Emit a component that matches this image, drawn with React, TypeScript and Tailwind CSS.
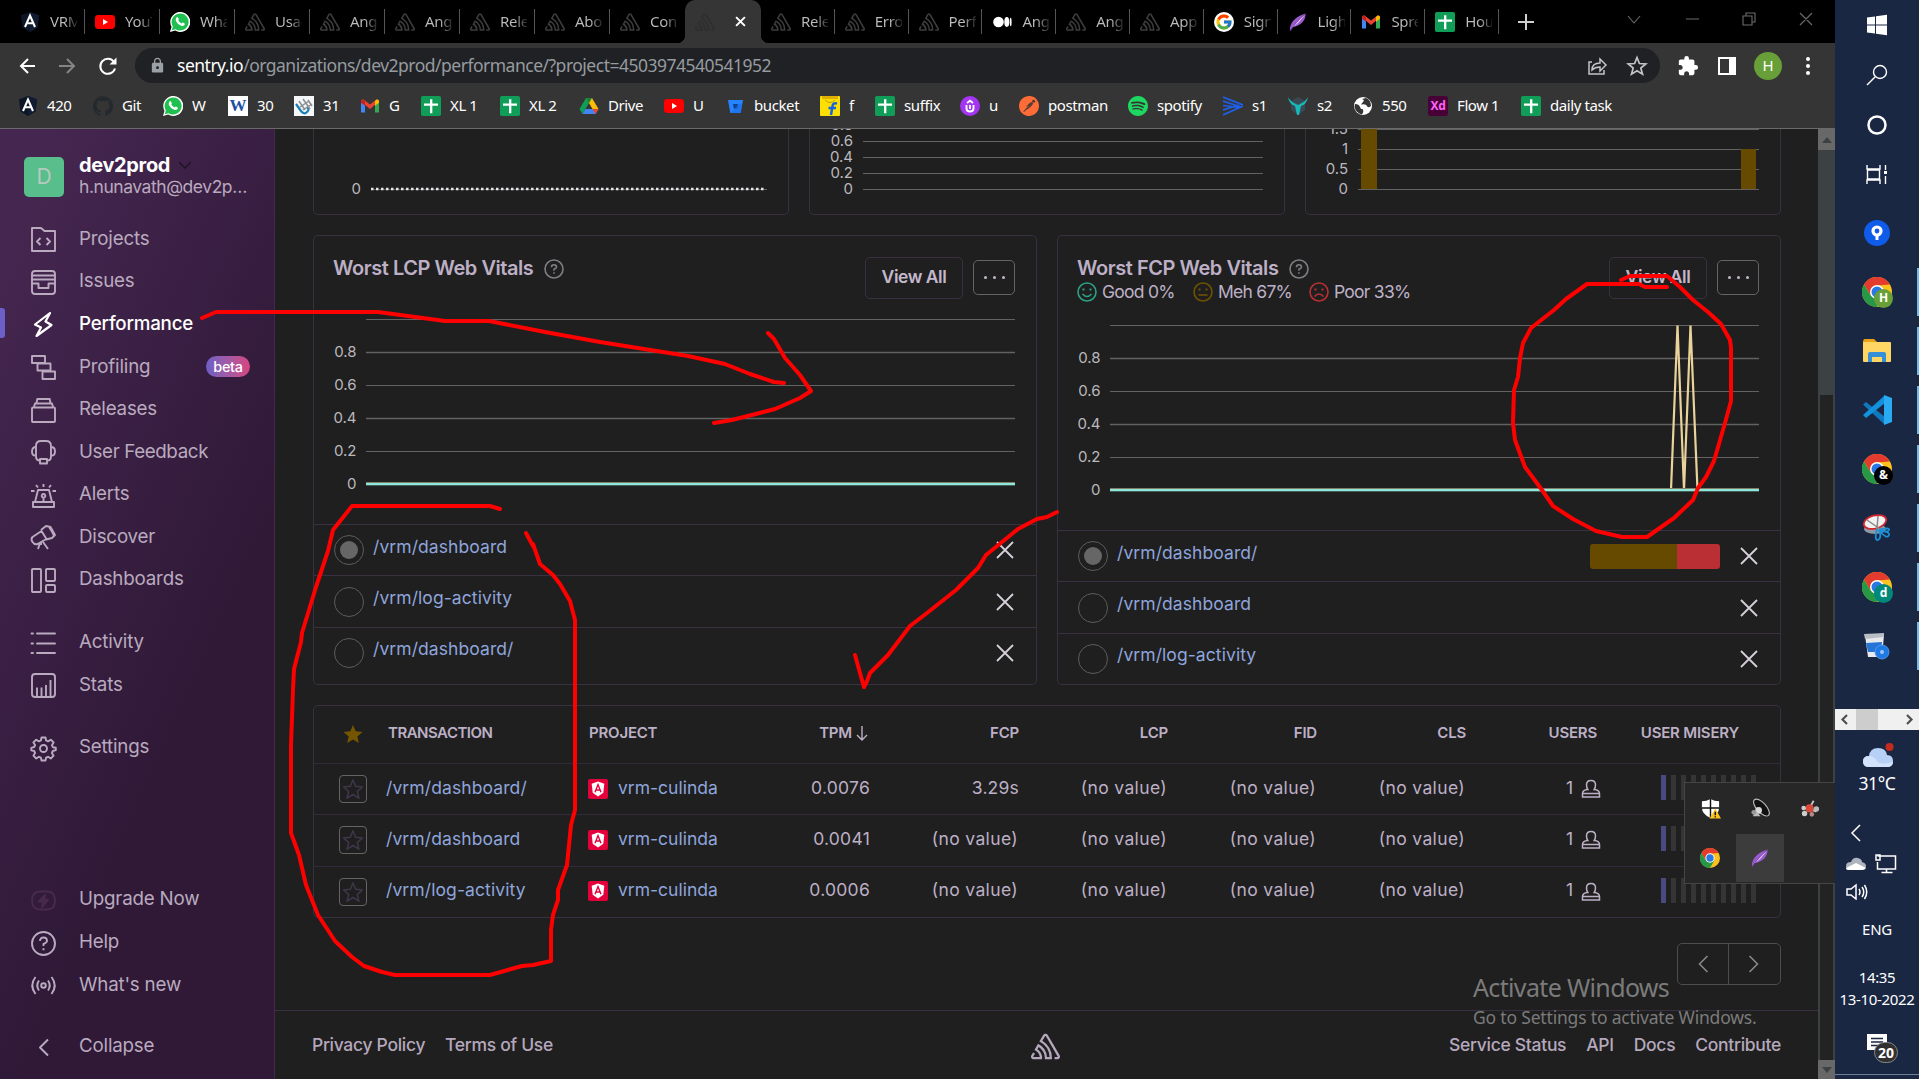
import type { ReactNode } from "react";
import { SiSentry, SiGithub, SiSpotify, SiPostman } from "react-icons/si";
import { FcGoogle } from "react-icons/fc";
import { FaWhatsapp } from "react-icons/fa";
import { MdExtension, MdLock } from "react-icons/md";

const SEGOE = "font-['Noto_Sans','Open_Sans',sans-serif]";

/* ---------- brand glyphs ---------- */

function AngularShield() {
  return (
    <svg viewBox="0 0 20 20" className="size-5">
      <path d="M10 0 19 3.3 17.6 15.4 10 20 2.4 15.4 1 3.3z" fill="#0d1626" />
      <path d="M10 0 19 3.3 17.6 15.4 10 20z" fill="#111c30" />
      <path d="M5 15 10 3.6 15 15M7 11.3h6" fill="none" stroke="#fff" strokeWidth="2.1" />
    </svg>
  );
}

function AngularTile() {
  return (
    <svg viewBox="0 0 20 20" className="size-5">
      <rect width="20" height="20" rx="2" fill="#e4003a" />
      <path d="M10 2.5 16.3 4.8 15.3 13.8 10 17.5 4.7 13.8 3.7 4.8z" fill="#fff" />
      <path d="M7 13.2 10 5.6 13 13.2M8 11h4" fill="none" stroke="#e4003a" strokeWidth="1.4" />
    </svg>
  );
}

function YouTube() {
  return (
    <svg viewBox="0 0 20 20" className="size-5">
      <rect y="3" width="20" height="14" rx="3.4" fill="#f00" />
      <path d="M8 7v6l5-3z" fill="#fff" />
    </svg>
  );
}

function WhatsApp() {
  return (
    <svg viewBox="0 0 20 20" className="size-5">
      <path d="M0 20 1.500 14.800A10 10 0 1 1 5.200 18.600z" fill="#fff" />
      <path d="M1.800 18.200 2.900 14.500A8.500 8.500 0 1 1 5.600 17.200z" fill="#20c050" />
      <path d="M6.500 5.500q1-1 1.600.2l.7 1.500q.2.500-.5 1.300 1.200 2.200 3.300 3 .8-1.200 1.300-.9l1.700.9q.6.600-.3 1.800-1.300 1-3 .5-4-1.300-5.500-5-.4-2 .7-3.300z" fill="#fff" />
    </svg>
  );
}

function Medium() {
  return (
    <svg viewBox="0 0 20 20" className="size-5" fill="#fff">
      <circle cx="6.500" cy="10" r="5.300" />
      <ellipse cx="14.800" cy="10" rx="2.500" ry="4.900" />
      <ellipse cx="18.700" cy="10" rx=".9" ry="4.300" />
    </svg>
  );
}

function Gmail() {
  return (
    <svg viewBox="0 0 20 20" className="size-5">
      <path d="M1 4.5v12h4V9z" fill="#4285f4" />
      <path d="M19 4.5v12h-4V9z" fill="#34a853" />
      <path d="M1 5.5Q1 2.8 3.6 3.6L10 8.4l6.4-4.8Q19 2.8 19 5.500L10 13z" fill="#ea4335" />
      <path d="M15 5v4.700l4-3V5.200Q18.600 2.700 16.300 3.700z" fill="#fbbc04" />
      <path d="M5 5v4.700L1 6.700V5.200Q1.400 2.700 3.700 3.700z" fill="#c5221f" />
    </svg>
  );
}

function Sheets() {
  return (
    <svg viewBox="0 0 20 20" className="size-5">
      <rect width="20" height="20" rx="1.8" fill="#0f9d58" />
      <path d="M3 8.600h14M10.200 3.200v14" stroke="#fff" strokeWidth="2.300" />
    </svg>
  );
}

function Drive() {
  return (
    <svg viewBox="0 0 20 20" className="size-5">
      <path d="M7 2h6l6.500 11h-6z" fill="#fbbc04" />
      <path d="M7 2 .5 13l3 5 6.500-11z" fill="#0f9d58" />
      <path d="M3.500 18h13l3-5h-13z" fill="#4285f4" />
      <path d="M7 2h6l-3 5z" fill="#188038" />
      <path d="m19.500 13-3 5-3-5z" fill="#ea4335" />
    </svg>
  );
}

function Feather() {
  return (
    <svg viewBox="0 0 20 20" className="size-5">
      <path d="M2 19C1 11 8 4 17.500 1.500 18 9 12 14 5 15z" fill="#9b59d0" />
      <path d="M2 19C6 12 11 7 17.500 1.500 12 10 9 12.500 5 15z" fill="#ddc4f5" />
      <path d="M2 19C6 13 11 7 17 2" stroke="#5c2a91" strokeWidth=".8" fill="none" />
    </svg>
  );
}

function Word() {
  return (
    <span className="flex size-5 items-center justify-center bg-white font-['Liberation_Serif',serif] text-[17px] leading-none font-bold text-[#1d4fa3]">
      W
    </span>
  );
}

function Stripes31() {
  return (
    <svg viewBox="0 0 20 20" className="size-5" fill="none">
      <rect width="20" height="20" fill="#f4f6f7" />
      <path d="m2 8 5 7q3 4 6 1t0-5" stroke="#1a7fb5" strokeWidth="2.200" />
      <path d="m5 5 6 9M9 3l7 10M14 4l4 6M6 11l9-6M9 14l9-6" stroke="#8a8f93" strokeWidth="1.500" />
    </svg>
  );
}

function Bucket() {
  return (
    <svg viewBox="0 0 20 20" className="size-5">
      <path d="M3 4h15l-2.300 13H5.300z" fill="#2684ff" />
      <path d="M8 8h5l-.8 4.500H8.800z" fill="#10418e" />
      <path d="M13 8h4.300l-1.600 9H6z" fill="#1565e0" opacity=".5" />
    </svg>
  );
}

function Flipkart() {
  return (
    <svg viewBox="0 0 20 20" className="size-5">
      <rect width="20" height="20" rx="1" fill="#fde003" />
      <path d="M2 0h16v3H2z" fill="#e2b100" />
      <path d="M5 4q5 5 10 0" fill="none" stroke="#c79c00" strokeWidth="1" />
      <path d="M17 7.500q-4-1-4.500 2.500L11 19M8.500 12h7.500" fill="none" stroke="#1464e0" strokeWidth="2.500" />
    </svg>
  );
}

function Udemy() {
  return (
    <svg viewBox="0 0 20 20" className="size-5">
      <circle cx="10" cy="10" r="10" fill="#a435f0" />
      <path d="M6.500 9v3.500q0 3 3.500 3t3.500-3V9M7 7l3-2.300L13 7M10 9v4" fill="none" stroke="#fff" strokeWidth="1.900" />
    </svg>
  );
}

function Sonar() {
  return (
    <svg viewBox="0 0 20 20" className="size-5">
      <path d="M0 1 20 9M0 5l18 6M0 9.500l16 2M20 10 0 19M16 9 0 14" stroke="#1f5fe8" strokeWidth="1.700" />
    </svg>
  );
}

function Bull() {
  return (
    <svg viewBox="0 0 20 20" className="size-5">
      <path d="m10 1 7 4v9l-7 5-7-5V5z" fill="#3a4a55" />
      <path d="M0 1q1 7 7 9l2 9h2l2-9q6-2 7-9-3 5-8 7l-2 1-2-1Q3 6 0 1z" fill="#16b8b8" />
    </svg>
  );
}

function Globe() {
  return (
    <svg viewBox="0 0 20 20" className="size-5">
      <circle cx="10" cy="10" r="9" fill="#fff" />
      <path d="M2 8q4 0 5 3t3 2q1 3-1 5.500Q3 17 1.500 11M9 3q3 1 1 3T8 8.500q5-1 6 1.500t4 0q0-6-5-8z" fill="#353535" />
    </svg>
  );
}

function Xd() {
  return (
    <span className="flex size-5 items-center justify-center rounded-[3px] bg-[#470137] font-['Noto_Sans',sans-serif] text-[12px] leading-none font-bold tracking-[-0.300px] text-[#ff61f6]">
      Xd
    </span>
  );
}

function Chrome({ className }: { className: string }) {
  return (
    <svg viewBox="0 0 30 30" className={className}>
      <circle cx="15" cy="15" r="15" fill="#fcc31e" />
      <path d="M2 7.500A15 15 0 0 1 28 7.500L15 8.500 9 19z" fill="#e33b2e" />
      <path d="M2 7.500A15 15 0 0 0 15 30l6.500-11.300L8.700 18.500z" fill="#279847" />
      <circle cx="15" cy="15" r="7" fill="#fff" />
      <circle cx="15" cy="15" r="5.500" fill="#2a78e4" />
    </svg>
  );
}

const Sentry = () => <SiSentry className="size-5 text-[#3d3d3d]" />;

/* ---------- browser frame ---------- */

const tabsBefore: [ReactNode, string][] = [
  [<AngularShield />, "VRM"],
  [<YouTube />, "YouT"],
  [<WhatsApp />, "Wha"],
  [<Sentry />, "Usag"],
  [<Sentry />, "Ang"],
  [<Sentry />, "Ang"],
  [<Sentry />, "Rele"],
  [<Sentry />, "Abo"],
  [<Sentry />, "Con"],
];
const tabsAfter: [ReactNode, string][] = [
  [<Sentry />, "Rele"],
  [<Sentry />, "Erro"],
  [<Sentry />, "Perf"],
  [<Medium />, "Ang"],
  [<Sentry />, "Ang"],
  [<Sentry />, "App"],
  [<span className="flex size-5 items-center justify-center rounded-full bg-white"><FcGoogle className="size-[18px]" /></span>, "Sign"],
  [<Feather />, "Ligh"],
  [<Gmail />, "Spre"],
  [<Sheets />, "Hou"],
];

function Tab({ icon, label, width, last }: { icon: ReactNode; label: string; width: string; last?: boolean }) {
  return (
    <div className={`flex h-[43px] shrink-0 items-center ${width}`}>
      <span className="ml-2.5 shrink-0">{icon}</span>
      <span className="ml-2.5 w-[27px] overflow-hidden bg-gradient-to-r from-[#bdbdbd] from-55% to-[#222] bg-clip-text text-[15px] tracking-[-0.300px] whitespace-nowrap text-transparent">
        {label}
      </span>
      {!last && <span className="ml-auto h-[25px] w-px bg-[#555]" />}
    </div>
  );
}

function TabStrip() {
  return (
    <div className="flex h-[43px] shrink-0 items-center bg-black pl-[10px]">
      {tabsBefore.map(([icon, label], i) => (
        <Tab key={i} icon={icon} label={label} width="w-[75px]" last={i === 8} />
      ))}
      <div className="relative flex h-[43px] w-[76px] shrink-0 items-center rounded-t-[10px] bg-[#353535] pl-[10px]">
        <SiSentry className="size-5 text-[#2e2e2e]" />
        <svg viewBox="0 0 10 10" className="ml-[20px] size-[11px]">
          <path d="m1 1 8 8M9 1 1 9" stroke="#fff" strokeWidth="1.800" />
        </svg>
        <span className="absolute bottom-0 -left-2 size-2 bg-[radial-gradient(circle_at_0_0,#000_8px,#353535_8.500px)]" />
        <span className="absolute -right-2 bottom-0 size-2 bg-[radial-gradient(circle_at_100%_0,#000_8px,#353535_8.500px)]" />
      </div>
      {tabsAfter.map(([icon, label], i) => (
        <Tab key={i} icon={icon} label={label} width="w-[73.800px]" />
      ))}
      <svg viewBox="0 0 16 16" className="ml-[19px] size-4">
        <path d="M8 0v16M0 8h16" stroke="#cfcfcf" strokeWidth="2" />
      </svg>
      <svg viewBox="0 0 190 20" className="mt-[-6px] mr-[21px] ml-auto h-5 w-[190px]" fill="none" stroke="#6c6c6c" strokeWidth="1.100">
        <path d="m9 7 6 7 6-7M67 10h13M124 7h9v9h-9zM127 7V4h9v9h-3M181 4l12 12M193 4l-12 12" transform="translate(-5 0)" />
      </svg>
    </div>
  );
}

function AddressBar() {
  return (
    <div className="flex h-[45px] shrink-0 items-center bg-[#353535]">
      <svg viewBox="0 0 100 20" className="ml-[18px] h-5 w-[100px]" fill="none" strokeWidth="2">
        <path d="M17 10H3m7-7-7 7 7 7" stroke="#fff" />
        <path d="M41 10h15m-7-7 7 7-7 7" stroke="#858585" />
        <path d="M96 6a7.500 7.500 0 1 0 1 6.500" stroke="#fff" />
        <path d="M98.500 1.500v7h-7z" fill="#fff" />
      </svg>
      <div className="ml-[17px] flex h-[35px] w-[1525px] items-center rounded-full bg-[#202124] pl-[14px]">
        <MdLock className="size-[17px] text-[#9aa0a6]" />
        <span className="ml-[11px] text-[17.500px] tracking-[-0.500px] whitespace-nowrap text-[#969ba0]">
          <span className="text-white">sentry.io</span>/organizations/dev2prod/performance/?project=4503974540541952
        </span>
        <svg viewBox="0 0 22 22" className="mr-[18px] ml-auto size-[22px]" fill="none" stroke="#c4c4c4" strokeWidth="1.500">
          <path d="M6 7H3v12h15v-4M6 15q0-7 8-7V4l6 6-6 6v-4q-5 0-8 3z" />
        </svg>
        <svg viewBox="0 0 22 22" className="mr-[12px] size-[22px]" fill="none" stroke="#c4c4c4" strokeWidth="1.700">
          <path d="m11 2.500 2.400 6 6.400.4-5 4.100 1.700 6.200-5.500-3.500-5.500 3.500L7.200 13l-5-4.100 6.400-.4z" />
        </svg>
      </div>
      <MdExtension className="ml-[17px] size-[22px] text-white" />
      <span className="ml-[19px] block h-[18px] w-[18px] border-2 border-r-[7px] border-white" />
      <span className="ml-[18px] flex size-7 items-center justify-center rounded-full bg-[#689f38] text-[15px] text-white">H</span>
      <span className="ml-[24px] flex flex-col gap-[3px]">
        <i className="size-1 rounded-full bg-white" />
        <i className="size-1 rounded-full bg-white" />
        <i className="size-1 rounded-full bg-white" />
      </span>
    </div>
  );
}

const bookmarks: [ReactNode, string, string][] = [
  [<AngularShield />, "420", "w-[75px]"],
  [<SiGithub className="size-5 text-[#24292e]" />, "Git", "w-[70px]"],
  [<WhatsApp />, "W", "w-[65px]"],
  [<Word />, "30", "w-[66px]"],
  [<Stripes31 />, "31", "w-[66px]"],
  [<Gmail />, "G", "w-[61px]"],
  [<Sheets />, "XL 1", "w-[79px]"],
  [<Sheets />, "XL 2", "w-[79px]"],
  [<Drive />, "Drive", "w-[85px]"],
  [<YouTube />, "U", "w-[61px]"],
  [<Bucket />, "bucket", "w-[95px]"],
  [<Flipkart />, "f", "w-[55px]"],
  [<Sheets />, "suffix", "w-[85px]"],
  [<Udemy />, "u", "w-[59px]"],
  [<SiPostman className="size-5 text-[#ff6c37]" />, "postman", "w-[109px]"],
  [<SiSpotify className="size-5 text-[#1ed760]" />, "spotify", "w-[95px]"],
  [<Sonar />, "s1", "w-[65px]"],
  [<Bull />, "s2", "w-[65px]"],
  [<Globe />, "550", "w-[75px]"],
  [<Xd />, "Flow 1", "w-[93px]"],
  [<Sheets />, "daily task", "w-[110px]"],
];

function Bookmarks() {
  return (
    <div className="flex h-[41px] shrink-0 items-center border-b border-[#6a6a6a] bg-[#353535] pb-[5px] pl-[18px]">
      {bookmarks.map(([icon, label, width], i) => (
        <div key={i} className={`flex shrink-0 items-center gap-[9px] ${width}`}>
          {icon}
          <span className="text-[15px] tracking-[-0.400px] whitespace-nowrap text-white">{label}</span>
        </div>
      ))}
    </div>
  );
}

/* ---------- sidebar ---------- */

const navIcons: Record<string, ReactNode> = {
  Projects: <path d="M1 1h9l3.500 3H24v20H1zM9.500 11 6 14.500 9.500 18M15.500 11l3.500 3.500-3.500 3.500" />,
  Issues: <path d="M4 1h17q3 0 3 3v17q0 3-3 3H4q-3 0-3-3V4q0-3 3-3zM1 5.500h23M1 9.500h23M1 13.500h6.500V18h10v-4.500H24" />,
  Performance: <path d="M19 1 4 12.500l6 3L5.500 24 20.500 13l-6-3.500z" strokeWidth="2.200" />,
  Profiling: <path d="M1 1h13v7H1zM6.500 8.500h13v7h-13zM11.500 16.500H24V24H11.500z" />,
  Releases: <path d="M2 9.500h21q1 0 1 1V23q0 1-1 1H2q-1 0-1-1V10.500q0-1 1-1zM3 9l1-3.500h17L22 9M5.500 5l.8-4h12.400l.8 4" />,
  "User Feedback": <path d="M9 20.500q-4 0-4-4V6q0-5 5-5h5q5 0 5 5v10.500q0 4-3.500 4M5 7Q1 7 1 11.500T5 15.500M20 7q4 0 4 4.500t-4 4M9 19h7v4.500H9z" />,
  Alerts: <path d="M2 19h21v5H2zM4 19 7 7h11l3 12M12.500 15v4M12.500 1v3M5 2l2 2.500M20 2l-2 2.500M0 8h3.500M21.500 8H25M12.500 11a1.800 1.800 0 1 0 .01 0z" />,
  Discover: <path d="m1.500 12 9-6 5 8-9 5q-3 1-5-2t0-5zM10 5l5-4 4.500 1L24 10l-3 3-6 1.500M18 2q3 4 5 9M9 18l-2 6M12 17l5 7M10 17v3" />,
  Dashboards: <path d="M2 1h7q1 0 1 1v21q0 1-1 1H2q-1 0-1-1V2q0-1 1-1zM16 1h7q1 0 1 1v10q0 1-1 1h-7q-1 0-1-1V2q0-1 1-1zM16 17h7q1 0 1 1v5q0 1-1 1h-7q-1 0-1-1v-5q0-1 1-1z" />,
  Activity: <path d="M6 2.500h18M6 12.500h18M6 22h18M.5 2.500H2M.5 12.500H2M.5 22H2" strokeLinecap="round" />,
  Stats: <path d="M4 1h17q3 0 3 3v17q0 3-3 3H4q-3 0-3-3V4q0-3 3-3zM6 24V14.500M10.500 24V14.500M15 24V12M19.500 24V7" />,
  Settings: (
    <>
      <circle cx="12.500" cy="12.500" r="3.500" />
      <path d="M10.500 1.500h4l.6 3 2 .9 2.700-1.700 2.800 2.800-1.700 2.700.9 2 3 .6v2.400l-3 .8-.9 2 1.700 2.700-2.800 2.800-2.700-1.700-2 .9-.6 2.800h-4l-.6-2.800-2-.9-2.700 1.700-2.800-2.800L4.100 17l-.9-2-2.900-.6v-2.600l2.900-.8.9-2-1.700-2.500 2.800-2.800 2.700 1.700 2-.9z" />
    </>
  ),
  "Upgrade Now": (
    <g stroke="#482a4c">
      <path d="M9 3.500h7q8 0 8 9t-8 9H9q-8 0-8-9t8-9z" />
      <path d="m14 7-6 6.500h4L11 19l6-7h-4z" fill="#482a4c" />
    </g>
  ),
  Help: (
    <>
      <circle cx="12.500" cy="12.500" r="11.500" />
      <path d="M9 10q0-3.500 3.500-3.500T16 9.800q0 2-3.500 3V15M12.500 17.200v2" />
    </>
  ),
  "What's new": (
    <>
      <circle cx="12.500" cy="12.500" r="2.300" />
      <path d="M8 7.500q-3.500 5 0 10M17 7.500q3.500 5 0 10M4.500 4q-6.500 8.500 0 17M20.500 4q6.500 8.500 0 17" />
    </>
  ),
  Collapse: <path d="m17 4.500-8 8 8 8" />,
};

function NavItem({ label, active, badge }: { label: string; active?: boolean; badge?: string }) {
  return (
    <div className={`flex h-[42.600px] shrink-0 items-center ${active ? "text-white" : "text-[#b9aabf]"}`}>
      <span className={`h-[30px] w-[5px] rounded-r-[3px] ${active ? "bg-[#6c5fc7]" : ""}`} />
      <svg viewBox="0 0 25 25" className="mt-[3px] ml-[26px] size-[25px] overflow-visible" fill="none" stroke="currentColor" strokeWidth="1.900" strokeLinejoin="round">
        {navIcons[label]}
      </svg>
      <span className={`mt-px ml-[23px] text-[18.750px] whitespace-nowrap ${active ? "font-medium" : ""} ${label.length > 11 ? "tracking-[-0.380px]" : "tracking-[-0.200px]"}`}>
        {label}
      </span>
      {badge && (
        <span className="mt-px mr-[24px] ml-auto flex h-[21px] w-11 items-center justify-center rounded-full bg-gradient-to-r from-[#6c5fc7] to-[#d6437f] text-[14.500px] font-medium tracking-[-0.300px] text-white">
          {badge}
        </span>
      )}
    </div>
  );
}

function Sidebar() {
  return (
    <aside className="flex w-[275px] shrink-0 flex-col border-r border-[#422a4c] bg-[linear-gradient(294.17deg,#2f1937_35.57%,#452650_92.42%)]">
      <div className="flex h-[88px] items-start pt-7 pl-6">
        <span className="flex size-10 items-center justify-center rounded-[5px] bg-[#57be8c] text-[21px] text-[#b9c9c0]">D</span>
        <div className="-mt-px ml-[15px]">
          <div className="flex h-[18px] items-center text-[20px] font-bold tracking-[-0.350px] text-white">
            dev2prod
            <svg viewBox="0 0 12 8" className="ml-[9px] h-2 w-3" fill="none" stroke="#1f1425" strokeWidth="1.500">
              <path d="m0 1 6 6 6-6" />
            </svg>
          </div>
          <div className="flex h-[27px] items-center text-[17.500px] tracking-[-0.450px] text-[#b9aabf]">h.nunavath@dev2p…</div>
        </div>
      </div>
      {["Projects", "Issues", "Performance", "Profiling", "Releases", "User Feedback", "Alerts", "Discover", "Dashboards"].map((l) => (
        <NavItem key={l} label={l} active={l === "Performance"} badge={l === "Profiling" ? "beta" : undefined} />
      ))}
      <div className="h-5 shrink-0" />
      <NavItem label="Activity" />
      <NavItem label="Stats" />
      <div className="h-5 shrink-0" />
      <NavItem label="Settings" />
      <div className="mt-auto mb-[12px] flex flex-col">
        <NavItem label="Upgrade Now" />
        <NavItem label="Help" />
        <NavItem label="What's new" />
        <div className="h-[19px]" />
        <NavItem label="Collapse" />
      </div>
    </aside>
  );
}

/* ---------- performance page ---------- */

const GRID = "#626262";

function AxisLabel({ x, y, children }: { x: number; y: number; children: ReactNode }) {
  return (
    <text x={x} y={y + 5} textAnchor="end" fontSize="15" fill="#bbb8be">
      {children}
    </text>
  );
}

function TopCard({ children }: { children: ReactNode }) {
  return (
    <div className="h-[86px] w-[476px] overflow-hidden rounded-b-[5px] border border-t-0 border-[#393041]">
      <svg viewBox="0 0 474 85" className="h-[85px] w-[474px]">
        {children}
      </svg>
    </div>
  );
}

function TopCards() {
  return (
    <div className="flex gap-5">
      <TopCard>
        <AxisLabel x={47} y={60}>0</AxisLabel>
        <path d="M57 60.500h396" stroke={GRID} />
        <path d="M57 60h395" stroke="#e8e4ea" strokeWidth="2.500" strokeDasharray="2.500 2.500" />
      </TopCard>
      <TopCard>
        {["0.8", "0.6", "0.4", "0.2", "0"].map((v, i) => (
          <g key={v}>
            <path d={`M53 ${Math.round(-4.5 + i * 16.1) + 0.5}h400`} stroke={GRID} />
            <AxisLabel x={43} y={-4.500 + i * 16.100}>{v}</AxisLabel>
          </g>
        ))}
      </TopCard>
      <TopCard>
        {["1.5", "1", "0.5", "0"].map((v, i) => (
          <g key={v}>
            <path d={`M52 ${i * 20 + 0.5}h401`} stroke={GRID} />
            <AxisLabel x={42} y={i * 20}>{v}</AxisLabel>
          </g>
        ))}
        <path d="M55 0h16v60H55zM435 20h15v40h-15z" fill="#664a00" />
      </TopCard>
    </div>
  );
}

function Face({ color, mouth }: { color: string; mouth: string }) {
  return (
    <svg viewBox="0 0 20 20" className="size-5" fill="none" stroke={color} strokeWidth="1.600">
      <circle cx="10" cy="10" r="9" />
      <path d={mouth} />
      <path d="M6.500 6.500v2M13.500 6.500v2" strokeWidth="2" />
    </svg>
  );
}

interface VitalsProps {
  title: string;
  shift: number;
  height: string;
  rows: string[];
  scores?: boolean;
}

function VitalsCard({ title, shift, height, rows, scores }: VitalsProps) {
  return (
    <div className="flex h-[450px] w-[724px] flex-col overflow-hidden rounded-[5px] border border-[#393041]">
      <div className="flex h-[79px] shrink-0 items-start pr-[21px] pl-[19px]">
        <div>
          <div className="mt-[20px] flex h-6 items-center text-[20px] font-semibold tracking-[-0.450px] whitespace-nowrap text-[#bdb0c6]">
            {title}
            <svg viewBox="0 0 20 20" className="mt-px ml-[11px] size-5" fill="none" stroke="#807c84" strokeWidth="1.600">
              <circle cx="10" cy="10" r="9" />
              <path d="M7.500 8.200q0-2.500 2.500-2.500t2.500 2.300q0 1.500-2.500 2.300v1.500M10 13.300v1.500" />
            </svg>
          </div>
          {scores && (
            <div className="flex h-6 items-center text-[17.500px] tracking-[-0.750px] whitespace-nowrap text-[#bdb0c6]">
              <Face color="#2ba185" mouth="M5.500 12q4.500 5 9 0" />
              <span className="w-[96px] pl-[5px]">Good 0%</span>
              <Face color="#6f5200" mouth="M5.500 13h9" />
              <span className="w-[96px] pl-[5px]">Meh 67%</span>
              <Face color="#b92f34" mouth="M5.500 14.500q4.500-5 9 0" />
              <span className="pl-[5px]">Poor 33%</span>
            </div>
          )}
        </div>
        <div className="mt-[21px] ml-auto flex h-[42px] w-[98px] items-center justify-center rounded-[5px] border border-[#393041] pb-0.5 text-[17.500px] font-semibold tracking-[-0.450px] text-[#c4b8cc]">
          View All
        </div>
        <div className="mt-[24px] ml-2.5 flex h-[35px] w-[42px] items-center justify-center gap-1.5 rounded-[5px] border border-[#646464]">
          <i className="size-[3px] rounded-full bg-[#c4b8cc]" />
          <i className="size-[3px] rounded-full bg-[#c4b8cc]" />
          <i className="size-[3px] rounded-full bg-[#c4b8cc]" />
        </div>
      </div>
      <svg viewBox={`0 ${-shift} 722 ${209 + shift}`} className={`w-[722px] shrink-0 ${height}`}>
        {["", "0.8", "0.6", "0.4", "0.2", "0"].map((v, i) => (
          <g key={i}>
            <path d={`M52 ${Math.round(4 + i * 32.9) + 0.5}h649`} stroke={GRID} strokeWidth={i % 2 ? 1.5 : 1} />
            <AxisLabel x={42.500} y={4 + i * 32.900}>{v}</AxisLabel>
          </g>
        ))}
        {scores && <path d="M613 169 619.500 4.500 626 169 632.500 4.500 639.500 169" fill="none" stroke="#e9d39b" strokeWidth="2.200" strokeLinejoin="bevel" />}
        <path d="M52 167.700h649" stroke="#857c68" strokeWidth="1.200" />
        <path d="M52 169.200h649" stroke="#8ce8d8" strokeWidth="2.200" />
      </svg>
      {rows.map((r, i) => (
        <div key={r} className="flex h-[51.400px] shrink-0 items-center border-t border-[#393041] px-5">
          <span className="flex size-[30px] items-center justify-center rounded-full border border-[#5c5c5c]">
            {i === 0 && <i className="size-[18px] rounded-full bg-[#666]" />}
          </span>
          <span className="-mt-[7px] ml-[9px] text-[17.500px] tracking-[0.080px] whitespace-nowrap text-[#8fa5dc]">{r}</span>
          {scores && i === 0 && (
            <span className="mr-[20px] ml-auto flex h-[25px] w-[130px] overflow-hidden rounded-[3px]">
              <i className="w-[87px] bg-[#664a00]" />
              <i className="flex-1 bg-[#b92f34]" />
            </span>
          )}
          <svg viewBox="0 0 18 18" className={`mr-[2px] size-[18px] ${scores && i === 0 ? "" : "ml-auto"}`}>
            <path d="m1 1 16 16M17 1 1 17" stroke="#d6d0da" strokeWidth="1.800" />
          </svg>
        </div>
      ))}
    </div>
  );
}

const STAR = "m10 1 2.700 6.300 6.800.6-5.200 4.500 1.600 6.700L10 15.500l-5.900 3.600 1.600-6.700L.5 7.900l6.800-.6z";
const COLS = "grid grid-cols-[262px_204px_90px_149px_149px_149px_149px_132px_1fr] items-center";

function TransactionTable() {
  const rows = [
    ["/vrm/dashboard/", "0.0076", "3.29s"],
    ["/vrm/dashboard", "0.0041", "(no value)"],
    ["/vrm/log-activity", "0.0006", "(no value)"],
  ];
  return (
    <div className="mt-5 h-[213px] overflow-hidden rounded-[5px] border border-[#393041] text-[#bdb0c6]">
      <div className={`${COLS} h-[57px] pb-[3px] text-right text-[15px] font-semibold tracking-[-0.200px] whitespace-nowrap`}>
        <div className="flex items-center pl-[29px] tracking-[-0.500px]">
          <svg viewBox="0 0 20 20" className="mt-px mr-[25px] size-5">
            <path d={STAR} fill="#755600" />
          </svg>
          TRANSACTION
        </div>
        <div className="pl-[13px] text-left">PROJECT</div>
        <div className="flex items-center justify-end gap-1 pr-0.5">
          TPM
          <svg viewBox="0 0 12 15" className="h-[15px] w-3" fill="none" stroke="currentColor" strokeWidth="1.400">
            <path d="M6 0v14M1 9l5 5 5-5" />
          </svg>
        </div>
        <div>FCP</div>
        <div>LCP</div>
        <div>FID</div>
        <div>CLS</div>
        <div className="pr-px">USERS</div>
        <div className="pr-[41px]">USER MISERY</div>
      </div>
      {rows.map(([name, tpm, fcp]) => (
        <div key={name} className={`${COLS} h-[51.300px] border-t border-[#322a3a] pb-[3px] text-right text-[17.500px] whitespace-nowrap`}>
          <div className="flex items-center pl-[25px] tracking-[0.100px] text-[#8fa5dc]">
            <span className="mt-[3px] mr-[19px] flex size-7 items-center justify-center rounded-[4px] border border-[#646464]">
              <svg viewBox="0 0 20 20" className="size-5">
                <path d={STAR} fill="none" stroke="#3f364a" strokeWidth="1.500" />
              </svg>
            </span>
            {name}
          </div>
          <div className="flex items-center gap-[10px] pl-[12px] text-[#8fa5dc]">
            <span className="mt-0.5"><AngularTile /></span>
            vrm-culinda
          </div>
          <div className="tracking-[0.250px]">{tpm}</div>
          <div className={fcp === "(no value)" ? "pr-px tracking-[0.350px]" : "tracking-[0.200px]"}>{fcp}</div>
          <div className="pr-px tracking-[0.350px]">(no value)</div>
          <div className="pr-px tracking-[0.350px]">(no value)</div>
          <div className="pr-px tracking-[0.350px]">(no value)</div>
          <div className="-mr-[3px] flex items-center justify-end gap-2">
            1
            <svg viewBox="0 0 20 20" className="mt-[3px] size-5" fill="none" stroke="currentColor" strokeWidth="1.500">
              <path d="M6.800 10.500Q5.500 8.500 5.500 6q0-4.500 4.500-4.500T14.500 6q0 2.500-1.300 4.500Q18.500 11 18.500 14.500V18h-17v-3.500Q1.500 11 6.800 10.500zM2 14.500h16" />
            </svg>
          </div>
          <div className="flex gap-[5px] pl-[63px]">
            {Array.from({ length: 10 }, (_, i) => (
              <i key={i} className={`h-[25px] w-[5px] ${i === 0 ? "bg-[#484a80]" : "bg-[#353535]"}`} />
            ))}
          </div>
        </div>
      ))}
    </div>
  );
}

function Footer() {
  return (
    <footer className="mt-[25px] flex h-[69px] items-center border-t border-[#393041] pr-[37px] pl-[37px] text-[17.500px] font-medium tracking-[-0.300px] text-[#b5a8bd]">
      <span className="w-[133px]">Privacy Policy</span>
      <span className="w-[586px]">Terms of Use</span>
      <SiSentry className="mt-0.5 size-[29px] text-[#b5a8bd]" />
      <span className="ml-auto">Service Status</span>
      <span className="ml-5">API</span>
      <span className="ml-5">Docs</span>
      <span className="ml-5">Contribute</span>
    </footer>
  );
}

function Page() {
  return (
    <main className="flex w-[1543px] shrink-0 flex-col bg-[#1f1f1f]">
      <div className="w-[1506px] pl-[38px]">
        <TopCards />
        <div className="mt-5 flex gap-5">
          <VitalsCard title="Worst LCP Web Vitals" shift={0} height="h-[209px]" rows={["/vrm/dashboard", "/vrm/log-activity", "/vrm/dashboard/"]} />
          <VitalsCard title="Worst FCP Web Vitals" shift={6} height="h-[215px]" rows={["/vrm/dashboard/", "/vrm/dashboard", "/vrm/log-activity"]} scores />
        </div>
        <TransactionTable />
        <div className="mt-[25px] ml-auto flex h-[42px] w-[104px] rounded-[5px] border border-[#4d4d4d]">
          <svg viewBox="0 0 102 40" className="h-10 w-[102px]" fill="none" stroke="#8d8a90" strokeWidth="1.500">
            <path d="M50.500 0v40" stroke="#4d4d4d" strokeWidth="1" />
            <path d="m29.500 12-8 8 8 8M71.500 12l8 8-8 8" />
          </svg>
        </div>
      </div>
      <Footer />
    </main>
  );
}

function ScrollBar() {
  return (
    <div className="flex w-[17px] shrink-0 flex-col border-x-2 border-[#3c4244] bg-[#232323]">
      <div className="-mx-0.5 flex h-[21px] items-center justify-center bg-[#686868]">
        <svg viewBox="0 0 10 6" className="h-1.5 w-2.5"><path d="M5 0 10 6H0z" fill="#3c4244" /></svg>
      </div>
      <div className="-mx-0.5 mr-0 h-[245px] bg-[#3c4244]" />
      <div className="-mx-0.5 mt-auto flex h-[19px] items-center justify-center bg-[#686868]">
        <svg viewBox="0 0 10 6" className="h-1.5 w-2.5"><path d="M5 6 10 0H0z" fill="#3c4244" /></svg>
      </div>
    </div>
  );
}

/* ---------- overlays ---------- */

const strokes = [
  "M202 318 216 312H378L445 321H489L545 332 600 342 688 356 725 364 750 374 774 382 784 383",
  "M768 333 774 339 785 358 800 375 811 391 800 398 775 409 732 420 714 423",
  "M500 509 490 506H352L333 530 328 551 316 587 302 633 301 642 294 669 293 690 291 745V833L299 855 306 885 318 915 335 941 352 957 364 966 382 972 395 975H490L522 966 533 965 551 961V930L553 915 558 900V890L567 865 571 825 575 810V620L570 601 560 584 553 575 540 564 533 544",
  "M1057 512 1047 517 1037 519 1018 529 1002 542 986 555 978 568 956 590 927 613 910 626 888 655 870 673 867 681 864 687",
  "M1621 280 1630 276H1667L1680 287 1693 300 1708 312 1721 324 1730 340 1731 348V401L1725 423 1714 461 1706 477 1698 488 1693 500 1674 518 1647 537H1622L1596 531 1573 519 1553 506 1542 490 1525 467 1515 440 1513 423 1514 390 1518 377 1520 358 1523 343 1531 328 1554 310 1566 299 1587 284H1639L1645 287H1667",
];

function Ink() {
  return (
    <svg viewBox="0 0 1835 1079" className="pointer-events-none absolute top-0 left-0 h-[1079px] w-[1835px]" fill="none" stroke="#f00" strokeLinecap="round" strokeLinejoin="round">
      {strokes.map((d, i) => (
        <path key={i} d={d} strokeWidth="4" />
      ))}
      <path d="M526 533 533 546M864 687 860 673 855 655" strokeWidth="4" />
    </svg>
  );
}

function Watermark() {
  return (
    <div className="absolute top-[970px] left-[1473px] whitespace-nowrap text-[#7b7b7b]">
      <div className="text-[25px] leading-[34px] tracking-[-0.650px]">Activate Windows</div>
      <div className="text-[17.500px] leading-[26px] tracking-[-0.180px]">Go to Settings to activate Windows.</div>
    </div>
  );
}

function TrayFlyout() {
  return (
    <div className="absolute top-[782px] left-[1684px] grid h-[102px] w-[151px] grid-cols-[50px_50px_50px] grid-rows-[50px_50px] items-center justify-items-center border border-r-0 border-[#454545] bg-[#272727]">
      <svg viewBox="0 0 22 22" className="size-[21px]">
        <path d="M11 1q4 2.500 9 2.500V10q0 7-9 11-9-4-9-11V3.500Q7 3.500 11 1z" fill="#fff" />
        <path d="M11 1v20M2 10.500h18" stroke="#111" strokeWidth="1.500" />
        <path d="m16 11 6 10.500H10z" fill="#fcc31e" />
        <path d="M16 14.500v3.500M16 19v1.500" stroke="#111" strokeWidth="1.500" />
      </svg>
      <svg viewBox="0 0 22 22" className="size-[21px]">
        <ellipse cx="12" cy="10" rx="5" ry="11" transform="rotate(-42 12 10)" fill="#111" stroke="#bbb" strokeWidth="1.200" />
        <circle cx="9" cy="13" r="3.500" fill="#d8d8d8" />
        <path d="m3 19 3-6 5 6z" fill="#bbb" />
        <circle cx="4" cy="15" r="2.500" fill="#999" />
      </svg>
      <svg viewBox="0 0 22 22" className="size-[20px]">
        <path d="m10 12 5-9M10 12 3 11M10 12l8 3" stroke="#ccc" strokeWidth="2" />
        <circle cx="10.500" cy="11.500" r="4.500" fill="#d94a38" />
        <circle cx="4" cy="11" r="2.500" fill="#ccc" />
        <circle cx="18" cy="12" r="3" fill="#bbb" />
        <circle cx="5" cy="17" r="3" fill="#ccc" />
        <circle cx="13" cy="18" r="2.500" fill="#b88" />
      </svg>
      <Chrome className="size-5" />
      <span className="flex h-[48px] w-[48px] items-center justify-center bg-[#3c3c3c]"><Feather /></span>
    </div>
  );
}

/* ---------- taskbar ---------- */

function ChromeApp({ badge, color }: { badge: string; color: string }) {
  return (
    <span className="relative">
      <Chrome className="size-[30px]" />
      <span className={`absolute top-[12px] left-[12px] flex size-[19px] items-center justify-center rounded-full text-[12px] leading-none font-bold text-white ${color}`}>{badge}</span>
    </span>
  );
}

const taskApps: [ReactNode, boolean][] = [
  [<svg viewBox="0 0 26 26" className="size-[26px]"><circle cx="13" cy="13" r="13" fill="#0f5bea" /><circle cx="13" cy="11" r="4" fill="none" stroke="#fff" strokeWidth="3.200" /><path d="M13 14v6" stroke="#fff" strokeWidth="3" /></svg>, false],
  [<ChromeApp badge="H" color="bg-[#689f38]" />, true],
  [<svg viewBox="0 0 28 24" className="h-6 w-7"><path d="M0 3q0-3 2-3h9l3 3v5H0z" fill="#e8a317" /><rect y="3" width="28" height="20" rx="1" fill="#ffd564" /><path d="M5 23V15q0-2 2-2h14q2 0 2 2v8h-4v-5H9v5z" fill="#3590d8" /></svg>, true],
  [<svg viewBox="0 0 30 30" className="size-[30px]"><path d="M1 9.500 4 7l19 15-1 7z" fill="#0f78bf" /><path d="M1 20 4 23 23 8 22 1z" fill="#1391dc" /><path d="m22 0 8 3v24l-8 3z" fill="#2aaaf2" /></svg>, true],
  [<ChromeApp badge="&" color="bg-black" />, true],
  [<svg viewBox="0 0 30 28" className="h-7 w-[30px]"><ellipse cx="13" cy="15" rx="11" ry="5" fill="#8d99a5" /><ellipse cx="13" cy="8" rx="11.500" ry="6.500" transform="rotate(-15 13 8)" fill="#f2f2f2" stroke="#d3272f" strokeWidth="1.800" /><path d="m5 6 13 9M16 2l-1 13" stroke="#888" strokeWidth="1.500" /><path d="M15 15q-3 12 1 11 4-2 1-10 8 10 10 5 1-3-10-5 11-3 10 0-1 3-10 0" fill="none" stroke="#1c8fd6" strokeWidth="1.800" /></svg>, true],
  [<ChromeApp badge="d" color="bg-[#00897b]" />, true],
  [<svg viewBox="0 0 26 28" className="h-7 w-[26px]"><path d="M1 3h19l-2 22H4z" fill="#e8eaec" /><path d="m0 2 20-1v4L1 7z" fill="#b9bec4" /><path d="m2 11 16-1-1 10H4z" fill="#2675d6" /><circle cx="18" cy="20" r="7" fill="#1f7ae6" stroke="#5a9ff0" strokeWidth=".8" /><circle cx="18" cy="20" r="2" fill="#9cc4f5" /></svg>, true],
];

function Taskbar() {
  return (
    <aside className="flex w-[84px] shrink-0 flex-col bg-[#1a2743] text-center text-white">
      <svg viewBox="0 0 84 203" className="h-[203px] w-[84px] shrink-0" fill="none" stroke="#fff" strokeWidth="1.400">
        <path d="m32 17.500 8-1.100V24.400H32zM41 16.200 52 14.800V24.400H41zM32 25.600h8v8L32 32.500zM41 25.600h11V35.200l-11-1.500z" fill="#fff" stroke="none" />
        <circle cx="45" cy="72" r="6.500" />
        <path d="m40 77-8 8" />
        <circle cx="42" cy="125" r="8.500" strokeWidth="2.500" />
        <path d="M32 165v4h13v-4M32 184v-4h13v4M32.500 170h12v9h-12zM50.500 165v5M50.500 176v8" />
        <path d="M49 171h3v3h-3z" fill="#fff" stroke="none" />
      </svg>
      {taskApps.map(([icon, open], i) => (
        <div key={i} className="flex h-[59px] shrink-0 items-center">
          <span className="flex w-[82px] justify-center pl-0.5">{icon}</span>
          <span className={`h-[48px] w-0.5 ${open ? "bg-[#76b9ed]" : ""}`} />
        </div>
      ))}
      <div className="mt-[34px] flex h-[21px] shrink-0 items-center bg-[#f0f0f0]">
        <svg viewBox="0 0 84 21" className="h-[21px] w-[84px]" fill="none" stroke="#505050" strokeWidth="2.200">
          <path d="M21 0h22v21H21z" fill="#cdcdcd" stroke="none" />
          <path d="M12 6l-4.500 4.500L12 15M72 6l4.500 4.500L72 15" />
        </svg>
      </div>
      <svg viewBox="0 0 34 28" className="mt-[12px] ml-[27px] h-7 w-[34px] shrink-0">
        <path d="M7 25q-6 0-6-5.500T7 14q1-8 9-8t9 7q6 0 6 6t-6 6z" fill="#b7d0f6" />
        <path d="M7 25q-6 0-6-5.500T7 14q5 0 8 5t16 1q0 5-6 5z" fill="#d3e3fb" />
        <circle cx="27.500" cy="5" r="4" fill="#c42b1c" />
      </svg>
      <div className="mt-px h-6 shrink-0 text-[17.500px] leading-6 tracking-[-0.400px]">31°C</div>
      <svg viewBox="0 0 84 82" className="mt-[23px] h-[82px] w-[84px] shrink-0" fill="none" stroke="#fff" strokeWidth="1.500">
        <path d="m25 7-8 8 8 8" />
        <path d="M15 52q-4 0-4-4t5-4q2-5 7-4 4 1 4 4 4 1 4 4t-4 4z" fill="#aeb4bd" stroke="none" />
        <path d="M13 52q-2 0-2-2l10-5 10 5q-1 2-4 2z" fill="#fff" stroke="none" />
        <path d="M43 38h18v13H43v-7M52 51v3M47 54.500h11M41.500 37h4v5h-4z" transform="translate(-.5 0)" />
        <path d="M12 71h4l5-4v14l-5-4h-4zM24 71q2 3 0 6M27 69q3.500 5 0 10M29.500 67q4.500 7 0 14" />
      </svg>
      <div className="mt-[17px] h-6 text-[15px] leading-6 tracking-[-0.300px]">ENG</div>
      <div className="mt-[25px] text-[15px] leading-[22px] tracking-[-0.350px] whitespace-nowrap">
        14:35
        <br />
        13-10-2022
      </div>
      <div className="relative mt-auto mb-[4px] h-[44px] border-b border-[#6d7f98]">
        <svg viewBox="0 0 20 20" className="absolute top-[2px] left-[32px] size-5">
          <path d="M0 1h20v16h-9l-3 3v-3H0z" fill="#fff" />
          <path d="M4 5.500h12M4 9h12M4 12.500h7" stroke="#1a2743" strokeWidth="1.300" />
        </svg>
        <span className="absolute top-[11px] left-[39px] flex h-[21px] w-6 items-center justify-center rounded-full border border-[#888] bg-[#303030] text-[14px] leading-none font-bold">20</span>
      </div>
    </aside>
  );
}

export default function App() {
  return (
    <div className={`relative flex h-[1079px] w-[1919px] overflow-hidden bg-black ${SEGOE}`}>
      <div className="flex w-[1835px] shrink-0 flex-col">
        <TabStrip />
        <AddressBar />
        <Bookmarks />
        <div className="flex h-[950px] overflow-hidden font-['Inter',sans-serif]">
          <Sidebar />
          <Page />
          <ScrollBar />
        </div>
      </div>
      <Watermark />
      <TrayFlyout />
      <Ink />
      <Taskbar />
    </div>
  );
}
